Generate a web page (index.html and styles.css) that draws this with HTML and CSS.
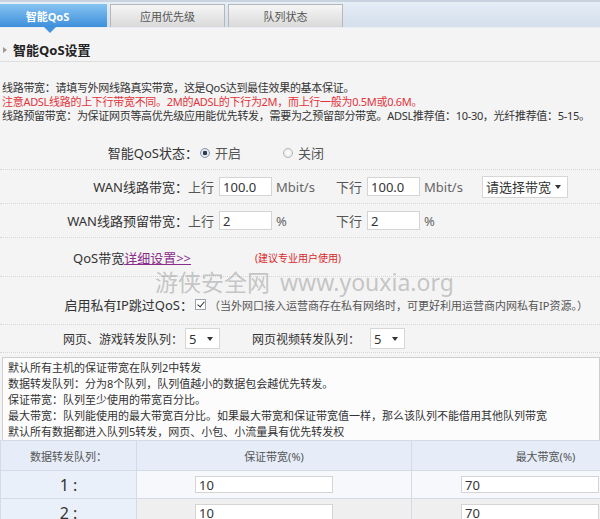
FILE: index.html
```html
<!DOCTYPE html>
<html lang="zh-CN">
<head>
<meta charset="UTF-8" />
<title>智能QoS设置</title>
<link rel="stylesheet" href="styles.css">
</head>
<body>
  <nav class="tabs">
    <a class="tab active">智能QoS</a>
    <a class="tab">应用优先级</a>
    <a class="tab">队列状态</a>
  </nav>

  <h2 class="section-title">智能QoS设置</h2>

  <div class="notes">
    <p>线路带宽：请填写外网线路真实带宽，这是QoS达到最佳效果的基本保证。</p>
    <p class="warn">注意ADSL线路的上下行带宽不同。2M的ADSL的下行为2M，而上行一般为0.5M或0.6M。</p>
    <p>线路预留带宽：为保证网页等高优先级应用能优先转发，需要为之预留部分带宽。ADSL推荐值：10-30，光纤推荐值：5-15。</p>
  </div>

  <form class="qos-form">
    <div class="row row-status">
      <span class="field-label">智能QoS状态：</span>
      <label class="radio"><input type="radio" name="qos" checked> 开启</label>
      <label class="radio off"><input type="radio" name="qos"> 关闭</label>
    </div>

    <div class="row">
      <span class="field-label">WAN线路带宽：</span>
      <span class="dir">上行</span><input class="text" type="text" value="100.0"><span class="unit">Mbit/s</span>
      <span class="dir second">下行</span><input class="text" type="text" value="100.0"><span class="unit">Mbit/s</span>
      <span class="select wide"><select><option>请选择带宽</option></select></span>
    </div>

    <div class="row">
      <span class="field-label">WAN线路预留带宽：</span>
      <span class="dir">上行</span><input class="text" type="text" value="2"><span class="unit">%</span>
      <span class="dir second">下行</span><input class="text" type="text" value="2"><span class="unit">%</span>
    </div>

    <div class="row row-link">
      <span>QoS带宽<a href="#" class="detail-link">详细设置&gt;&gt;</a></span>
      <span class="hint">(建议专业用户使用)</span>
    </div>

    <div class="row row-private">
      <span class="field-label">启用私有IP跳过QoS：</span>
      <input class="check" type="checkbox" checked>
      <span class="note">（当外网口接入运营商存在私有网络时，可更好利用运营商内网私有IP资源。）</span>
    </div>

    <div class="row row-queue">
      <span class="field-label">网页、游戏转发队列：</span>
      <span class="select small"><select><option>5</option></select></span>
      <span class="queue-label">网页视频转发队列：</span>
      <span class="select small"><select><option>5</option></select></span>
    </div>
  </form>

  <div class="watermark">游侠安全网 www.youxia.org</div>

  <div class="info-box">
    <p>默认所有主机的保证带宽在队列2中转发</p>
    <p>数据转发队列：分为8个队列，队列值越小的数据包会越优先转发。</p>
    <p>保证带宽：队列至少使用的带宽百分比。</p>
    <p>最大带宽：队列能使用的最大带宽百分比。如果最大带宽和保证带宽值一样，那么该队列不能借用其他队列带宽</p>
    <p>默认所有数据都进入队列5转发，网页、小包、小流量具有优先转发权</p>
  </div>

  <table class="queue-table">
    <thead>
      <tr>
        <th class="col-queue">数据转发队列：</th>
        <th class="col-min">保证带宽(%)</th>
        <th class="col-max">最大带宽(%)</th>
      </tr>
    </thead>
    <tbody>
      <tr>
        <td class="col-queue">1 :</td>
        <td class="col-min"><input class="cell-input" type="text" value="10"></td>
        <td class="col-max"><input class="cell-input" type="text" value="70"></td>
      </tr>
      <tr class="alt">
        <td class="col-queue">2 :</td>
        <td class="col-min"><input class="cell-input" type="text" value="10"></td>
        <td class="col-max"><input class="cell-input" type="text" value="70"></td>
      </tr>
    </tbody>
  </table>
</body>
</html>
```

FILE: styles.css
```css
:root {
  --text: #333;
  --muted: #555;
  --dots: #d6d6d6;
  --font: "Noto Sans", "Noto Sans CJK SC", sans-serif;
}
* {
  box-sizing: border-box;
}
html, body {
  overflow: hidden;
}
body {
  margin: 0;
  position: relative;
  background: #f4f4f4;
  font-family: var(--font);
  color: var(--text);
}
p {
  margin: 0;
}

/* tab strip */
.tabs {
  display: flex;
  height: 28px;
  padding-top: 2px;
  background: linear-gradient(#e5edf7, #d4dfec);
  border-top: 2px solid #c9d3df;
  border-bottom: 1px solid #e9eef4;
}
.tab {
  width: 115px;
  margin-left: 3px;
  display: flex;
  align-items: center;
  justify-content: center;
  font-size: 11px;
  color: var(--muted);
  background: linear-gradient(#f6f6f6, #d9d9d9);
  border: 1px solid #b7b7b7;
  border-bottom: none;
}
.tab.active {
  position: relative;
  width: 107px;
  margin-left: 0;
  padding-right: 12px;
  color: #fff;
  font-weight: 700;
  background: linear-gradient(#86c4f1, #3e8fdb);
  border: none;
}
.tab.active::after {
  content: "";
  position: absolute;
  left: 44px;
  bottom: -6px;
  border-left: 6px solid transparent;
  border-right: 6px solid transparent;
  border-top: 6px solid #4491dc;
}

/* title */
.section-title {
  position: relative;
  margin: 11px 0 0;
  height: 23px;
  line-height: 22px;
  padding-left: 13px;
  font-size: 13px;
  font-weight: 700;
  color: #222;
  border-bottom: 1px solid #dedede;
}
.section-title::before {
  content: "";
  position: absolute;
  left: 3px;
  top: 8px;
  border-left: 4px solid #999;
  border-top: 3px solid transparent;
  border-bottom: 3px solid transparent;
}

.notes {
  margin-top: 19px;
  padding-left: 2px;
  font-size: 11px;
  line-height: 14px;
  letter-spacing: -0.3px;
  white-space: nowrap;
}
.notes .warn {
  color: #e2333b;
}

/* form rows */
.qos-form {
  margin-top: 13px;
}
.row {
  display: flex;
  align-items: center;
  height: 34px;
  font-size: 13px;
  border-bottom: 1px dotted var(--dots);
}
.field-label {
  width: 188px;
  text-align: right;
  white-space: nowrap;
}
.row-status .field-label {
  width: 198px;
}
.radio {
  display: flex;
  align-items: center;
  color: var(--muted);
}
.radio.off {
  margin-left: 40px;
}
.radio input {
  appearance: none;
  width: 10px;
  height: 10px;
  margin: 0 5px 0 2px;
  border-radius: 50%;
  border: 1px solid #b4b4b4;
  background: radial-gradient(circle, #fff, #e4e4e4);
}
.radio input:checked {
  border-color: #8797ab;
  background: radial-gradient(circle, #2f3a4c 0 2px, #dfe6ee 2.5px);
}
.dir {
  color: var(--muted);
  margin-right: 5px;
}
.dir.second {
  margin-left: 20px;
}
.text {
  width: 53px;
  height: 19px;
  padding: 0 3px;
  border: 1px solid #d4d4d4;
  background: #fff;
  font: 13px var(--font);
  color: var(--text);
}
.unit {
  margin-left: 4px;
  color: #666;
  width: 40px;
}

/* fake selects */
.select {
  position: relative;
  display: inline-block;
  background: #fff;
  border: 1px solid #d6d6d6;
}
.select select {
  appearance: none;
  border: none;
  background: transparent;
  font: 13px var(--font);
  color: var(--text);
  padding: 0 0 0 3px;
  height: 19px;
}
.select::after {
  content: "";
  position: absolute;
  right: 6px;
  top: 8px;
  border-left: 3px solid transparent;
  border-right: 3px solid transparent;
  border-top: 4px solid #333;
}
.select.wide {
  margin-left: 18px;
  width: 86px;
  height: 22px;
}
.select.wide select {
  width: 84px;
  height: 20px;
}
.select.small {
  width: 35px;
}
.select.small select {
  width: 33px;
}

.row-link {
  height: 39px;
  padding-left: 73px;
}
.detail-link {
  color: #8a2e8a;
}
.hint {
  margin-left: 64px;
  font-size: 10px;
  color: #d8262b;
}

.row-private {
  height: 48px;
  padding-top: 8px;
}
.row-private .field-label {
  width: 193px;
}
.check {
  appearance: none;
  position: relative;
  width: 11px;
  height: 11px;
  margin: 0 3px 0 2px;
  border: 1px solid #9aa3ae;
  background: #fff;
}
.check:checked::after {
  content: "";
  position: absolute;
  left: 3px;
  top: 0;
  width: 3px;
  height: 6px;
  border-right: 1.5px solid #333;
  border-bottom: 1.5px solid #333;
  transform: rotate(40deg);
}
.note {
  font-size: 11px;
  color: var(--muted);
}

.row-queue {
  height: 28px;
  font-size: 12px;
}
.row-queue .field-label {
  width: 185px;
  padding-right: 2px;
}
.queue-label {
  margin: 0 10px 0 32px;
}

/* watermark laid over the form */
.watermark {
  position: absolute;
  left: 155px;
  top: 264px;
  font-size: 23px;
  color: rgba(150, 150, 150, 0.5);
  word-spacing: 4px;
  pointer-events: none;
}

/* info block */
.info-box {
  margin: 4px 0 0 2px;
  padding: 2px 5px 0;
  border: 1px solid #cfcfcf;
  border-bottom: none;
  background: #fcfcfc;
  font-size: 11px;
  line-height: 16px;
  height: 83px;
}

/* queue table */
.queue-table {
  width: 680px;
  border-collapse: collapse;
  table-layout: fixed;
}
.queue-table th,
.queue-table td {
  border: 1px solid #d3dbe6;
  padding: 0;
}
.queue-table th {
  height: 30px;
  font-size: 11px;
  font-weight: 400;
  color: var(--muted);
  background: #e6edf8;
}
.queue-table td {
  height: 28px;
  background: #f6f8fb;
}
.queue-table .col-queue {
  width: 136px;
  text-align: center;
}
.queue-table .col-min {
  width: 275px;
}
.queue-table td.col-queue {
  font-size: 16px;
  color: #333;
  background: #eaf0f9;
}
.queue-table td.col-min {
  padding-left: 58px;
}
.queue-table td.col-max {
  padding-left: 49px;
}
.queue-table tr.alt td {
  background: #efefef;
}
.queue-table tr.alt td.col-queue {
  background: #eaf0f9;
}
.cell-input {
  display: block;
  width: 138px;
  height: 17px;
  padding: 0 3px;
  border: 1px solid #d4d4d4;
  background: #fff;
  font: 13px var(--font);
  color: var(--text);
}
```
